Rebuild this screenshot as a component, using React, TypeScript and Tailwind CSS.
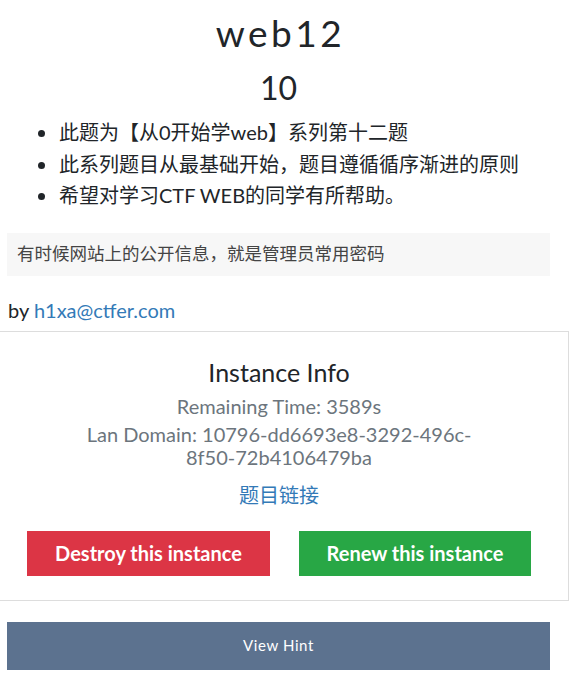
import React from 'react';

const items = [
  '此题为【从0开始学web】系列第十二题',
  '此系列题目从最基础开始，题目遵循循序渐进的原则',
  '希望对学习CTF WEB的同学有所帮助。',
];

const App: React.FC = () => {
  return (
    <div
      className="w-[575px] h-[691px] bg-white text-[#212529] overflow-hidden"
      style={{ fontFamily: 'Lato, "Noto Sans CJK SC", sans-serif' }}
    >
      <div className="w-[557px]">
        {/* Title */}
        <h1 className="mt-[11px] text-center text-[37px] leading-[43px] tracking-[3.5px] font-normal text-[#212529] pl-[4px]">
          web12
        </h1>
        <h2 className="mt-[15px] text-center text-[32px] leading-[38px] font-normal">10</h2>

        {/* Description */}
        <ul className="mt-[10px] pl-[58px] list-disc text-[20px] leading-[31.5px] marker:text-[20px]">
          {items.map((t) => (
            <li key={t} className="pl-[1px]">{t}</li>
          ))}
        </ul>

        {/* Hint text */}
        <div className="mt-[21px] ml-[7px] w-[543px] h-[43px] bg-[#f7f7f7] flex items-center px-[10px]">
          <span className="text-[17.5px] text-[#444]">有时候网站上的公开信息，就是管理员常用密码</span>
        </div>

        <p className="mt-[21px] ml-[8px] text-[20px] leading-[26px]">
          by <a className="text-[#337ab7]">h1xa@ctfer.com</a>
        </p>
      </div>

      {/* Instance card */}
      <div className="mt-[8px] w-[569px] h-[270px] border-y border-r border-[#dddddd] pr-[10px] text-center">
        <h3 className="pt-[25px] text-[25px] leading-[30px] font-normal text-[#212529]">Instance Info</h3>
        <p className="mt-[8.5px] text-[20px] leading-[23px] text-[#6c757d]">Remaining Time: 3589s</p>
        <p className="mt-[5px] mx-auto max-w-[400px] text-[20px] leading-[23px] text-[#6c757d]">
          Lan Domain: 10796-dd6693e8-3292-496c-8f50-72b4106479ba
        </p>
        <a className="block mt-[11.5px] text-[20px] leading-[28px] text-[#337ab7]">题目链接</a>
        <div className="mt-[22px] flex justify-center gap-[29px]">
          <button className="w-[243px] h-[45px] bg-[#dc3545] text-white text-[20px] font-bold">
            Destroy this instance
          </button>
          <button className="w-[232px] h-[45px] bg-[#28a745] text-white text-[20px] font-bold">
            Renew this instance
          </button>
        </div>
      </div>

      {/* Hint button */}
      <button className="mt-[21px] ml-[7px] w-[543px] h-[48px] bg-[#5c728f] text-white text-[15px] tracking-[0.6px]">
        View Hint
      </button>
    </div>
  );
};

export default App;
